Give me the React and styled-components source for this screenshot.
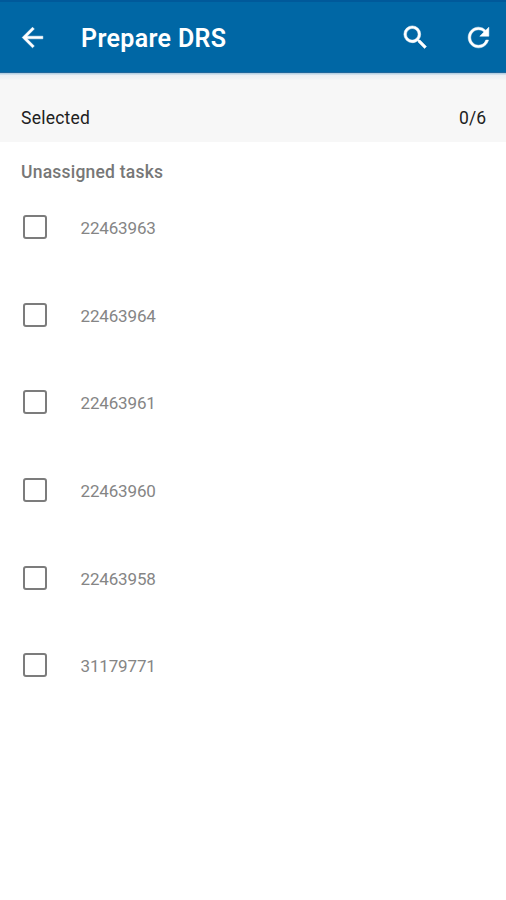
import React from 'react';
import styled, { createGlobalStyle } from 'styled-components';
import { MdArrowBack, MdSearch, MdRefresh } from 'react-icons/md';

const tasks = ['22463963', '22463964', '22463961', '22463960', '22463958', '31179771'];

const App = () => {
    return (
        <>
            <GlobalStyle />
            <Screen>
                <Toolbar>
                    <IconButton aria-label="Back">
                        <MdArrowBack size={31} />
                    </IconButton>
                    <Title>Prepare DRS</Title>
                    <Actions>
                        <IconButton aria-label="Search">
                            <MdSearch size={31} />
                        </IconButton>
                        <IconButton aria-label="Refresh">
                            <MdRefresh size={31} />
                        </IconButton>
                    </Actions>
                </Toolbar>
                <Summary>
                    <span>Selected</span>
                    <Count>0/{tasks.length}</Count>
                </Summary>
                <SectionTitle>Unassigned tasks</SectionTitle>
                <TaskList>
                    {tasks.map((task) => (
                        <TaskRow key={task}>
                            <Checkbox type="checkbox" aria-label={task} />
                            <TaskNumber>{task}</TaskNumber>
                        </TaskRow>
                    ))}
                </TaskList>
            </Screen>
        </>
    );
};

export default App;


const GlobalStyle = createGlobalStyle`
    * {
        box-sizing: border-box;
    }
    body {
        margin: 0;
        background: #fff;
        font-family: Roboto, sans-serif;
    }
`;

const Screen = styled.div`
    min-height: 900px;
    background: #fff;
`;

const Toolbar = styled.header`
    display: flex;
    align-items: center;
    height: 73px;
    padding: 0 12px 0 17px;
    background: #0067a5;
    border-top: 2px solid #00599a;
    border-bottom: 1px solid #1c669c;
    color: #fff;
`;

const IconButton = styled.button`
    display: flex;
    padding: 0;
    border: 0;
    background: none;
    color: inherit;

    path:not([fill='none']) {
        stroke: currentColor;
        stroke-width: 0.4px;
    }
`;

const Title = styled.h1`
    margin: 4px 0 0 33px;
    font-size: 25px;
    line-height: 30px;
    font-weight: 600;
    letter-spacing: 0.35px;
`;

const Actions = styled.div`
    display: flex;
    gap: 32px;
    margin-left: auto;
`;

const Summary = styled.div`
    display: flex;
    justify-content: space-between;
    height: 69px;
    padding: 34px 20px 0 21px;
    background: linear-gradient(#b5d0e2 1px, #eaeff4 2px, #f1f3f5 6px, #f7f7f7 7px);
    color: #212121;
    font-size: 17.5px;
    line-height: 22px;
    letter-spacing: 0.25px;
`;

const Count = styled.span`
    letter-spacing: 0;
`;

const SectionTitle = styled.h2`
    margin: 19px 0 0 21px;
    color: #777;
    font-size: 17.5px;
    line-height: 22px;
    font-weight: 500;
    letter-spacing: 0.22px;
`;

const TaskList = styled.ul`
    margin: 0;
    padding: 0;
    list-style: none;
`;

const TaskRow = styled.li`
    display: flex;
    align-items: center;
    height: 87.7px;
    padding-left: 22.5px;
`;

const Checkbox = styled.input`
    appearance: none;
    width: 24px;
    height: 24px;
    margin: 0;
    border: 2px solid #7c7c7c;
    border-radius: 3px;
`;

const TaskNumber = styled.span`
    margin: 2px 0 0 34px;
    color: #858585;
    font-size: 17px;
    line-height: 22px;
    letter-spacing: -0.15px;
`;
